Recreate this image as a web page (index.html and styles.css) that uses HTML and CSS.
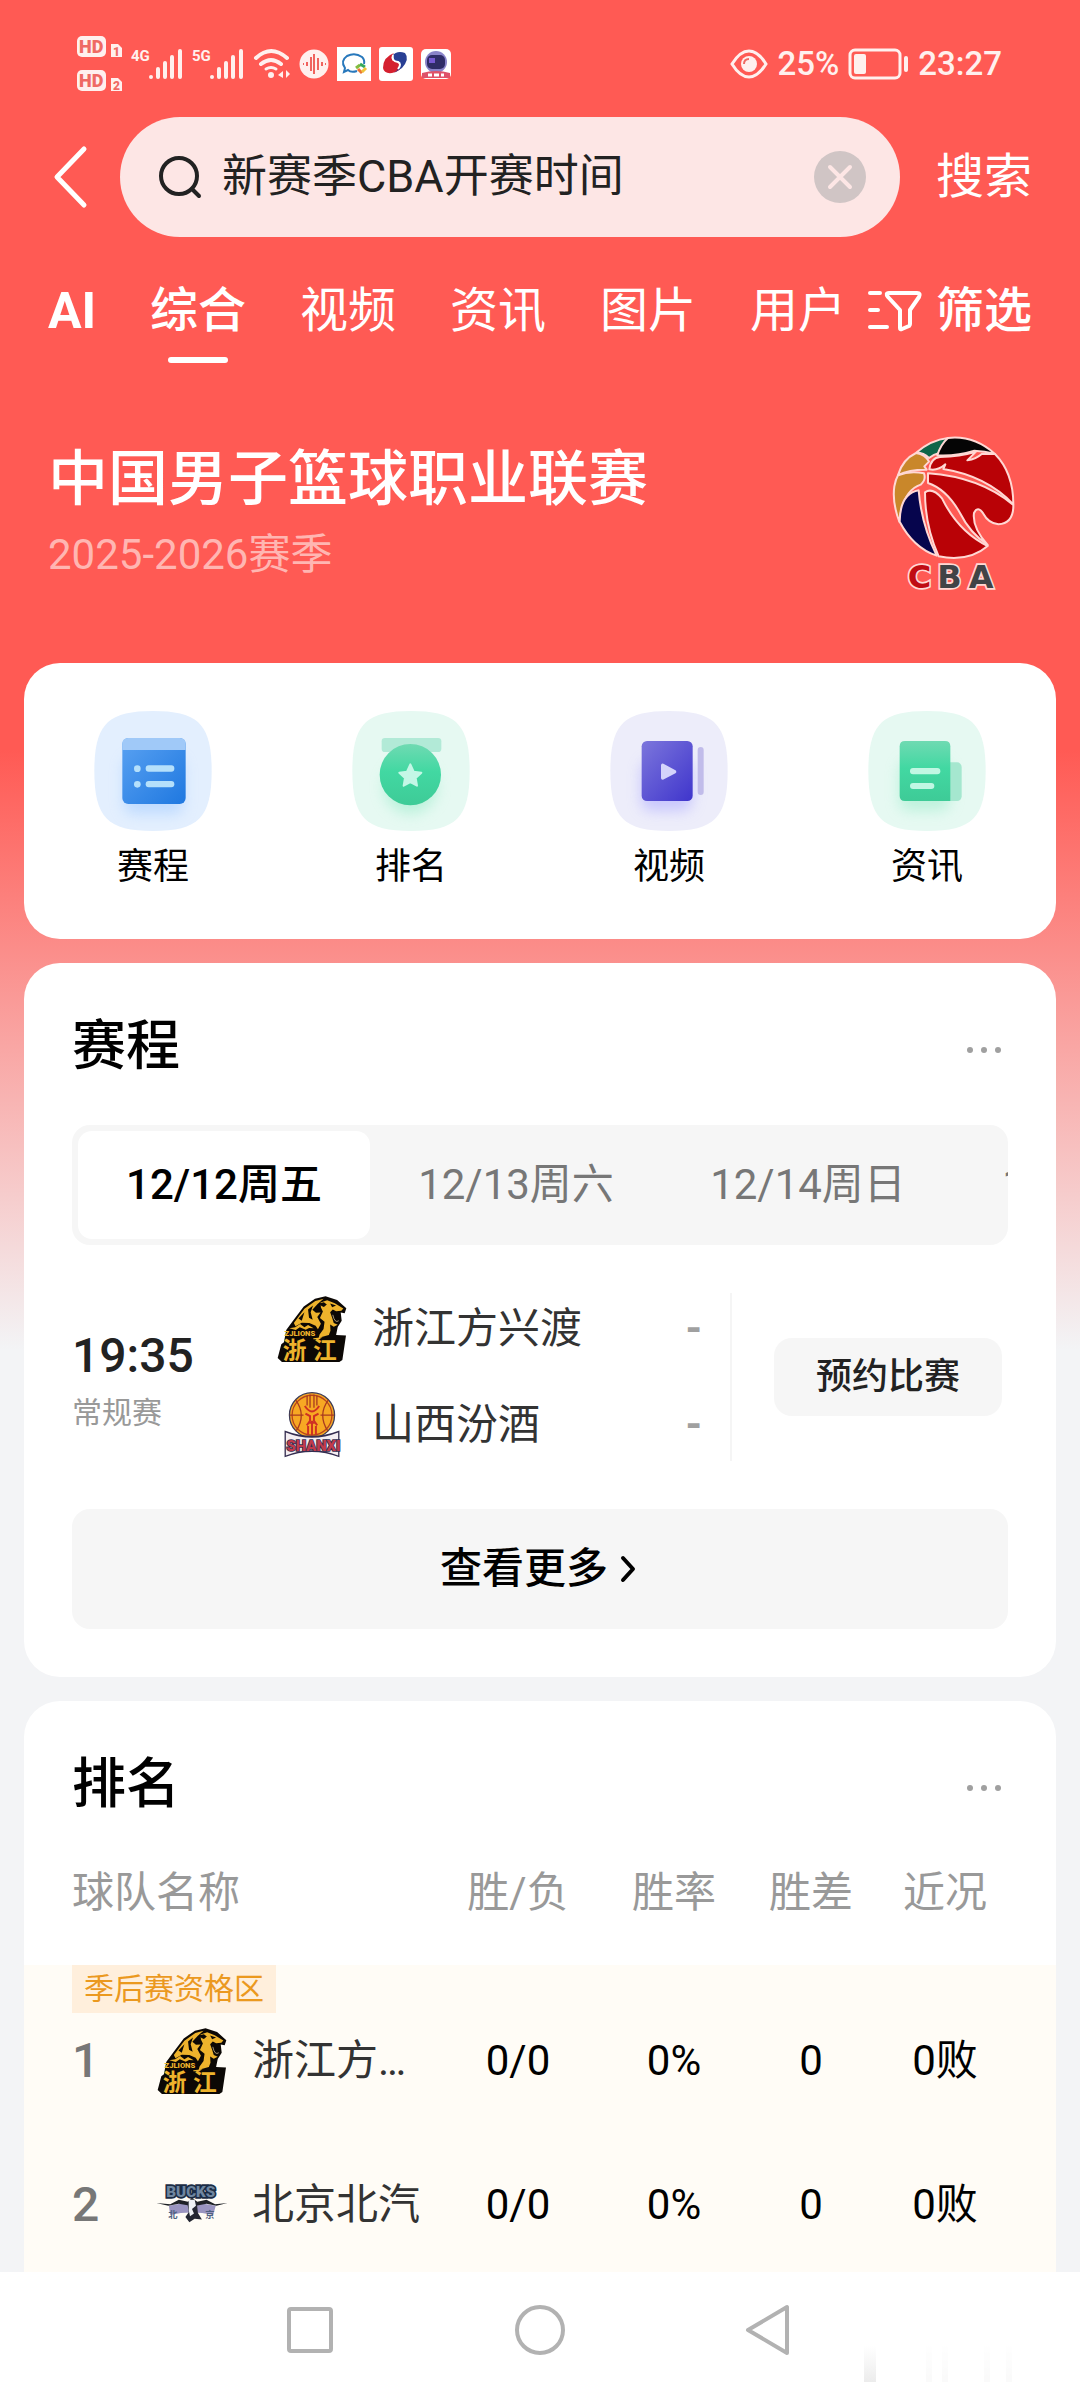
FILE: index.html
```html
<!DOCTYPE html>
<html lang="zh-CN">
<head>
<meta charset="utf-8">
<meta name="viewport" content="width=device-width, initial-scale=1">
<title>新赛季CBA开赛时间</title>
<link rel="stylesheet" href="styles.css">
</head>
<body>
<svg class="defs" width="0" height="0" aria-hidden="true">
  <defs>
    <linearGradient id="blue" x1="0" y1="0" x2="1" y2="1"><stop offset="0" stop-color="#5aa2f2"/><stop offset="1" stop-color="#1f78e0"/></linearGradient>
    <linearGradient id="green" x1="0" y1="0" x2="0" y2="1"><stop offset="0" stop-color="#6fdab2"/><stop offset=".45" stop-color="#42d8a2"/><stop offset="1" stop-color="#3ecb97"/></linearGradient>
    <linearGradient id="violet" x1="0" y1="0" x2="1" y2="1"><stop offset="0" stop-color="#7c76dc"/><stop offset="1" stop-color="#3f35cc"/></linearGradient>
    <linearGradient id="smudge" x1="0" y1="0" x2="0" y2="1"><stop offset="0" stop-color="#fff"/><stop offset="1" stop-color="#ececec"/></linearGradient>
    <filter id="soft" x="-50%" y="-50%" width="200%" height="200%"><feGaussianBlur stdDeviation="20"/></filter>
    <path id="squircle" d="M0 180C0 40 40 0 176 0S352 40 352 180S312 360 176 360S0 320 0 180Z"/>
    <symbol id="bars" viewBox="0 0 34 30"><g fill="#fff0ee"><circle cx="2" cy="28" r="2"/><rect x="7" y="18" width="4" height="12" rx="2"/><rect x="14" y="12" width="4" height="18" rx="2"/><rect x="21" y="6" width="4" height="24" rx="2"/><rect x="29" y="0" width="4" height="30" rx="2"/></g></symbol>
    <symbol id="zhejiang" viewBox="84 76 210 200">
      <path fill="#0c0805" d="M111 179L132 150L164 108L198 84L230 77L265 88L293 113L288 128L276 126L279 151L267 170L262 194L292 196L281 270L272 276H98L85 264L96 222L104 216Z"/>
      <path fill="#eeb32c" d="M134 158L166 115L199 91L224 84L206 100L190 118L201 127L215 126L205 140L216 160L207 177L200 166L181 158L158 157L139 168ZM215 96L235 89L258 98L284 114L278 121L262 122L252 117L244 125L250 142L255 158L267 163L255 169L244 162L245 181L240 194L218 200L208 207L212 193L224 176L227 154L213 143L222 123L216 111ZM120 174L138 171L153 161L166 171L177 164L194 174L180 173L170 178L152 171L140 179Z"/>
      <path fill="#0c0805" d="M210 99L225 95L234 102L225 109L218 106ZM244 99L262 105L250 110ZM148 144L166 125L158 151ZM177 117L192 105L185 125L191 148L180 142Z"/>
      <path fill="none" stroke="#f6ddaa" stroke-width="2" d="M252 133Q258 160 270 151"/>
      <text x="106" y="198" class="logo-latin" font-size="23" fill="#eeb32c">ZJLIONS</text>
      <g class="logo-han" font-size="72" fill="#eeb32c"><text x="100" y="267">浙</text><text x="192" y="267">江</text></g>
      <path d="M193 204l28-3-10 6h-18z" fill="#eeb32c"/>
    </symbol>
    <symbol id="shanxi" viewBox="100 364 172 202">
      <circle cx="186" cy="435" r="69" fill="#f7a823" stroke="#3d3c58" stroke-width="4"/>
      <circle cx="186" cy="435" r="61" fill="none" stroke="#b8451c" stroke-width="4"/>
      <g fill="none" stroke="#a83a20" stroke-width="4"><path d="M118 435H160M212 435H254M136 388Q170 435 137 484M236 388Q202 435 235 484M171 375V405M180 372V412M192 372V412M201 375V405"/><path d="M164 407Q186 440 208 407M166 430L180 438V452L170 466M206 430L192 438V452L202 466M174 458H198M174 468V494M186 452V496M198 468V494" stroke="#cf3023" stroke-width="6"/></g>
      <path fill="#342d50" d="M102 482Q186 514 270 482V564Q186 532 102 564Z"/>
      <path fill="#f4eef2" d="M106 488Q186 520 266 488V558Q186 526 106 558Z"/>
      <text x="108" y="545" class="logo-latin" font-size="45" fill="#c13b4b" stroke="#342d50" stroke-width="5" paint-order="stroke">SHANXI</text>
    </symbol>
  </defs>
</svg>

<div class="app">
  <header class="top">
    <div class="status">
      <div class="status-left">
        <svg width="46" height="56" viewBox="0 0 46 56" fill="#fff0ee" role="img" aria-label="HD">
          <rect x="0" y="0" width="29" height="21" rx="5"/><path d="M34 8h7l4 4v9h-11z"/>
          <rect x="0" y="34" width="29" height="21" rx="5"/><path d="M34 42h7l4 4v9h-11z"/>
          <g fill="#ef6a64" class="logo-latin"><text x="2" y="17" font-size="18">HD</text><text x="2" y="51" font-size="18">HD</text><text x="36" y="20" font-size="12">1</text><text x="36" y="54" font-size="12">2</text></g>
        </svg>
        <div class="signal"><span>4G</span><svg width="34" height="30"><use href="#bars"/></svg></div>
        <div class="signal"><span>5G</span><svg width="34" height="30"><use href="#bars"/></svg></div>
        <svg width="38" height="32" viewBox="0 0 38 32" fill="none" stroke="#fff0ee" stroke-width="4" stroke-linecap="round"><path d="M3 10Q18-4 34 10M8 16Q18 8 28 16"/><circle cx="18" cy="27" r="3" fill="#fff0ee" stroke="none"/><path d="M13 21Q18 18 23 21" stroke-width="3"/><path d="M30 23v7l-5-3zM33 22v8l4-4z" fill="#fff0ee" stroke="none"/></svg>
        <svg width="30" height="30" viewBox="0 0 30 30"><circle cx="15" cy="15" r="14.500" fill="#fff0ee"/><path d="M4 15h1M8 13v4M12 8v14M15 5v20M19 9v12M23 13v4M26 15h1" stroke="#f0635e" stroke-width="2"/></svg>
        <svg width="34" height="34" viewBox="0 0 34 34"><path fill="#fff" d="M0 0h34v34H0z"/><path d="M20 24Q14 26 11 23L7 25L8 21Q3 14 10 9Q18 5 25 10Q28 13 27 17" fill="none" stroke="#2878bc" stroke-width="2"/><path d="M19 21l4-3" stroke="#83bd3f" stroke-width="3"/><path d="M23 17l5 3" stroke="#35a85a" stroke-width="3"/><path d="M21 22l4 4" stroke="#eb7532" stroke-width="3"/><path d="M25 25l4-4" stroke="#efc23a" stroke-width="3"/></svg>
        <svg width="34" height="34" viewBox="0 0 34 34"><rect width="34" height="34" rx="3" fill="#fff"/><path fill="#d5202f" d="M15 6Q4 10 4 21Q5 27 13 26Q23 24 23 17Q20 13 14 14Q11 10 15 6Z"/><path fill="#293f94" d="M13 9Q18 3 26 6Q31 12 23 21L15 26Q23 20 20 15Q12 14 13 9Z"/><path d="M14 8Q12 14 19 15Q23 17 19 22" fill="none" stroke="#fff" stroke-width="2"/></svg>
        <svg width="30" height="30" viewBox="0 0 30 30"><rect width="30" height="30" rx="5" fill="#fff"/><circle cx="15" cy="13" r="11" fill="#8a83c9"/><rect x="6" y="6" width="18" height="14" rx="5" fill="#302c67"/><path d="M8 9h6v5H8z" fill="#7759d2"/><path d="M1 24q14-4 28 0v5H1z" fill="#df5269"/><path d="M7 26h4M13 26h5M20 26h3" stroke="#fff" stroke-width="3"/></svg>
      </div>
      <div class="status-right">
        <svg width="38" height="30" viewBox="0 0 38 30"><path d="M2 15Q10 2 19 2T36 15Q28 28 19 28T2 15Z" fill="none" stroke="#fff0ee" stroke-width="3"/><circle cx="19" cy="15" r="8" fill="#fff0ee"/><path d="M14 15Q14 10 19 10" stroke="#ef6a64" stroke-width="2" fill="none"/></svg>
        <span>25%</span>
        <svg width="61" height="32" viewBox="0 0 61 32" fill="#fff0ee"><rect x="2" y="2" width="50" height="28" rx="5" fill="none" stroke="#fff0ee" stroke-width="3"/><rect x="6" y="6" width="12" height="20" rx="2"/><rect x="56" y="8" width="4" height="16" rx="2"/></svg>
        <time>23:27</time>
      </div>
    </div>

    <form class="search">
      <button class="icon-button back" type="button" aria-label="返回"><svg width="48" height="64" viewBox="0 0 48 64"><path d="M36 4L9 32L36 60" fill="none" stroke="#fff" stroke-width="5" stroke-linecap="round" stroke-linejoin="round"/></svg></button>
      <div class="search-box">
        <svg width="42" height="42" viewBox="0 0 42 42" fill="none" stroke="#222" stroke-width="4" stroke-linecap="round"><circle cx="20" cy="20" r="18"/><path d="M33 33l7 7"/></svg>
        <input type="text" aria-label="搜索内容" value="新赛季CBA开赛时间">
        <button class="icon-button" type="button" aria-label="清除"><svg width="52" height="52" viewBox="0 0 52 52"><circle cx="26" cy="26" r="26" fill="#d0c5c5"/><path d="M16 16L36 36M36 16L16 36" stroke="#fde6e5" stroke-width="4" stroke-linecap="round"/></svg></button>
      </div>
      <button class="submit" type="submit">搜索</button>
    </form>

    <div class="tabs-row">
      <nav class="tabs">
        <a class="ai" href="#ai">AI</a><a class="current" href="#all">综合</a><a href="#video">视频</a><a href="#news">资讯</a><a href="#images">图片</a><a href="#users">用户</a>
      </nav>
      <button class="filter" type="button"><svg width="54" height="42" viewBox="0 0 54 42" fill="none" stroke="#fff" stroke-width="4" stroke-linecap="round" stroke-linejoin="round"><path d="M2 3h10M2 20h8M2 37h17M21 3h28q4 0 2 4L42 20v14q0 1-1 2l-7 3q-2 1-2-1V20L20 7q-3-4 1-4z"/></svg>筛选</button>
    </div>
  </header>

  <main class="content">
    <section class="hero">
      <div>
        <h1>中国男子篮球职业联赛</h1>
        <p>2025-2026赛季</p>
      </div>
      <svg class="league-logo" width="124" height="156" viewBox="96 42 372 468" role="img" aria-label="CBA">
        <g stroke="#ffd8d4" stroke-width="6" stroke-linejoin="round">
          <path fill="#0e6549" d="M170 94Q213 57 264 51Q245 75 236 97Q222 100 207 111Q191 96 170 94Z"/>
          <path fill="#050505" d="M264 51Q340 42 404 98Q374 90 343 89Q290 106 232 103Q242 70 264 51Z"/>
          <path fill="#c9872a" d="M114 162Q128 115 168 96Q197 101 207 122L193 136L200 146Q150 145 114 162Z"/>
          <path fill="#c9872a" d="M192 157Q199 177 182 191Q128 209 118 302Q96 244 103 196Q107 175 114 163Q150 148 192 157Z"/>
          <path fill="#06054d" d="M176 208Q184 310 230 404Q160 380 119 302Q120 218 176 208Z"/>
          <path fill="#b90206" d="M208 145Q213 110 240 108Q300 106 348 92L322 118Q348 114 366 98L405 99Q460 155 460 250Q380 165 250 144L256 130Q234 150 208 145Z"/>
          <path fill="#b90206" d="M204 157Q360 168 460 252Q461 307 415 310Q385 306 370 278Q353 252 342 276Q336 320 383 372Q330 336 300 276Q260 205 204 186Z"/>
          <path fill="#b90206" d="M195 214Q217 198 246 232Q295 332 383 375Q326 424 236 406Q195 315 195 214Z"/>
        </g>
        <g class="logo-wide" font-size="96" stroke="#ffd8d4" stroke-width="10" paint-order="stroke"><text x="143" y="502" fill="#c00c13">C</text><text x="232" y="502" fill="#414346">B</text><text x="326" y="502" fill="#414346">A</text></g>
      </svg>
    </section>

    <nav class="card shortcuts">
      <a href="#schedule">
        <svg width="118" height="120" viewBox="0 0 352 360"><use href="#squircle" fill="#e3effe"/><rect x="88" y="140" width="180" height="170" rx="30" fill="#a9cfff" opacity=".6" filter="url(#soft)"/><rect x="84" y="81" width="190" height="198" rx="18" fill="url(#blue)"/><path d="M84 117V99q0-18 18-18h154q18 0 18 18v18z" fill="#a0c9f8"/><g fill="#b5e0fb"><circle cx="129" cy="173" r="10"/><circle cx="129" cy="220" r="10"/><rect x="154" y="163" width="86" height="19" rx="9"/><rect x="154" y="210" width="86" height="19" rx="9"/></g></svg>
        <span>赛程</span></a>
      <a href="#ranking">
        <svg width="118" height="120" viewBox="0 0 352 360"><use href="#squircle" fill="#e6f9f2"/><circle cx="174" cy="228" r="80" fill="#9deccb" opacity=".6" filter="url(#soft)"/><rect x="88" y="81" width="179" height="42" rx="10" fill="#b2ead7"/><circle cx="174" cy="191" r="92" fill="url(#green)"/><path d="M174 160l10 22 23 3-17 16 4 23-20-11-20 11 4-23-17-16 23-3z" fill="#c4f7e6" stroke="#c4f7e6" stroke-width="6" stroke-linejoin="round"/></svg>
        <span>排名</span></a>
      <a href="#clips">
        <svg width="118" height="120" viewBox="0 0 352 360"><use href="#squircle" fill="#ededfa"/><rect x="92" y="150" width="154" height="150" rx="30" fill="#aaa8ff" opacity=".55" filter="url(#soft)"/><rect x="262" y="108" width="18" height="144" rx="9" fill="#c1bcea"/><rect x="94" y="90" width="153" height="180" rx="16" fill="url(#violet)"/><path d="M157 163v38l36-19z" fill="#d4d4fb" stroke="#d4d4fb" stroke-width="10" stroke-linejoin="round"/></svg>
        <span>视频</span></a>
      <a href="#articles">
        <svg width="118" height="120" viewBox="0 0 352 360"><use href="#squircle" fill="#e6f9f2"/><rect x="92" y="150" width="154" height="150" rx="30" fill="#9deccb" opacity=".55" filter="url(#soft)"/><rect x="200" y="154" width="80" height="116" rx="14" fill="#a5e7cf"/><path d="M246 270H110q-16 0-16-16V106q0-16 16-16h120q16 0 16 16z" fill="url(#green)"/><g fill="#c1f7e3"><rect x="125" y="171" width="91" height="19" rx="9"/><rect x="125" y="216" width="73" height="18" rx="9"/></g></svg>
        <span>资讯</span></a>
    </nav>

    <section class="card schedule" id="schedule">
      <div class="card-head"><h2>赛程</h2><button class="icon-button" type="button" aria-label="更多选项"><svg width="48" height="24" viewBox="0 0 48 24" fill="#a0a0a0"><circle cx="10" cy="15" r="3"/><circle cx="24" cy="15" r="3"/><circle cx="38" cy="15" r="3"/></svg></button></div>
      <div class="dates">
        <button class="current" type="button">12/12周五</button><button type="button">12/13周六</button><button type="button">12/14周日</button><button type="button">12/15周一</button>
      </div>
      <div class="match">
        <div class="when"><time>19:35</time><small>常规赛</small></div>
        <div class="teams">
          <div class="team"><svg width="72" height="66"><use href="#zhejiang"/></svg><span>浙江方兴渡</span><b>-</b></div>
          <div class="team"><svg width="72" height="66"><use href="#shanxi"/></svg><span>山西汾酒</span><b>-</b></div>
        </div>
        <div class="booking"><button type="button">预约比赛</button></div>
      </div>
      <a class="more" href="#more">查看更多<svg width="20" height="28" viewBox="0 0 20 28"><path d="M3 3l10 11L3 25" fill="none" stroke="#000" stroke-width="4" stroke-linecap="round" stroke-linejoin="round"/></svg></a>
    </section>

    <section class="card ranking" id="ranking">
      <div class="card-head"><h2>排名</h2><button class="icon-button" type="button" aria-label="更多选项"><svg width="48" height="24" viewBox="0 0 48 24" fill="#a0a0a0"><circle cx="10" cy="15" r="3"/><circle cx="24" cy="15" r="3"/><circle cx="38" cy="15" r="3"/></svg></button></div>
      <table>
        <colgroup><col><col class="c-record"><col class="c-rate"><col class="c-diff"><col class="c-form"></colgroup>
        <thead><tr><th scope="col">球队名称</th><th scope="col">胜/负</th><th scope="col">胜率</th><th scope="col">胜差</th><th scope="col">近况</th></tr></thead>
        <tbody>
          <tr class="zone"><td colspan="5"><span>季后赛资格区</span></td></tr>
          <tr><td><div class="club"><b>1</b><svg width="72" height="66"><use href="#zhejiang"/></svg><span>浙江方兴渡</span></div></td><td>0/0</td><td>0%</td><td>0</td><td>0败</td></tr>
          <tr><td><div class="club"><b>2</b><svg width="72" height="66" viewBox="288 516 216 200">
            <text x="318" y="592" class="logo-latin" font-size="46" fill="#6f86a0" stroke="#1b2c45" stroke-width="10" paint-order="stroke">BUCKS</text>
            <path fill="#9a94c0" d="M326 618Q394 604 468 618L460 646Q394 632 330 646Z"/>
            <path fill="#1e2126" d="M288 610L330 614L356 600L384 606L396 594L412 606L440 600L466 614L504 610L470 618L440 612L400 620L356 612L324 618Z"/>
            <path fill="#242733" d="M382 610L410 606L414 640L426 660L404 658L388 668L376 652L386 638Z"/>
            <path fill="#eef1f5" d="M386 600L404 600L408 618L396 628L402 642L390 650L386 632Z"/>
            <g class="logo-han" font-size="28" fill="#4e6180"><text x="324" y="656">北</text><text x="436" y="656">京</text></g>
          </svg><span>北京北汽</span></div></td><td>0/0</td><td>0%</td><td>0</td><td>0败</td></tr>
        </tbody>
      </table>
    </section>
  </main>

  <footer class="system-nav">
    <button class="icon-button" type="button" aria-label="最近任务"><svg width="52" height="52" viewBox="0 0 52 52"><rect x="5" y="5" width="42" height="42" rx="2" fill="none" stroke="#b2b2b2" stroke-width="4"/></svg></button>
    <button class="icon-button" type="button" aria-label="主屏幕"><svg width="52" height="52" viewBox="0 0 52 52"><circle cx="26" cy="26" r="23" fill="none" stroke="#b2b2b2" stroke-width="4"/></svg></button>
    <button class="icon-button" type="button" aria-label="返回"><svg width="52" height="52" viewBox="0 0 52 52"><path d="M43 3V49L4 26Z" fill="none" stroke="#b2b2b2" stroke-width="4" stroke-linejoin="round"/></svg></button>
    <svg class="shade" width="210" height="36" viewBox="0 0 210 36" aria-hidden="true" fill="url(#smudge)"><rect x="4" width="12" height="36"/><g opacity=".25"><rect x="66" width="6" height="36"/><rect x="82" width="6" height="36"/><rect x="124" width="6" height="36"/><rect x="146" width="6" height="36"/></g></svg>
  </footer>
</div>
</body>
</html>
```

FILE: styles.css
```css
* { box-sizing: border-box; }

body {
  margin: 0;
  font-family: Roboto, "Noto Sans CJK SC", sans-serif;
  font-size: 42px;
  line-height: 60px;
  color: #000;
}

h1, h2, p { margin: 0; }
a { color: inherit; text-decoration: none; }
svg { display: block; flex: none; overflow: visible; }
button, input { font: inherit; color: inherit; border: 0; padding: 0; background: none; }
.icon-button { display: flex; }
.defs { position: absolute; }

.logo-latin { font-family: Roboto, sans-serif; font-weight: 900; }
.logo-wide { font-family: "DejaVu Sans", sans-serif; font-weight: 700; }
.logo-han { font-family: "Noto Sans CJK SC", sans-serif; font-weight: 700; }

.app {
  display: flex;
  flex-direction: column;
  height: 100vh;
  background: linear-gradient(#ff5a54 750px, #f3f4f6 1350px);
}

/* Status bar */
.top { color: #fff; }
.status {
  display: flex;
  justify-content: space-between;
  padding: 36px 78px 24px 77px;
  height: 117px;
  color: #fff0ee;
}
.status-left, .status-right { display: flex; align-items: center; height: 56px; gap: 9px; }
.status-left { gap: 8px; }
.status-right { font-size: 33px; font-weight: 500; }
.signal { display: flex; align-items: flex-start; }
.signal span { font-size: 15px; line-height: 15px; font-weight: 700; width: 18px; }
.signal svg { margin-right: 1px; }

/* Search */
.search { display: flex; align-items: center; padding: 0 48px; }
.search-box {
  flex: 1;
  min-width: 0;
  display: flex;
  align-items: center;
  gap: 21px;
  height: 120px;
  margin: 0 36px 0 24px;
  padding: 0 34px 0 39px;
  border-radius: 60px;
  background: #fde6e5;
}
.search-box input { flex: 1; min-width: 0; height: 60px; font-size: 45px; color: #222; outline: 0; }
.submit { font-size: 48px; }

.tabs-row {
  display: flex;
  justify-content: space-between;
  padding: 36px 48px 0;
  font-size: 48px;
  line-height: 76px;
}
.tabs { display: flex; gap: 54px; height: 90px; overflow: hidden; }
.tabs a { position: relative; white-space: nowrap; }
.tabs .ai { width: 48px; font-size: 50px; font-weight: 700; }
.tabs .current { font-weight: 500; }
.tabs .current::after {
  content: "";
  position: absolute;
  left: 18px;
  right: 18px;
  bottom: 0;
  height: 6px;
  border-radius: 3px;
  background: #fff;
}
.filter { display: flex; align-items: center; gap: 14px; height: 76px; font-weight: 500; white-space: nowrap; }

/* Scrolling content */
.content {
  flex: 1;
  min-height: 0;
  overflow-y: auto;
  scrollbar-width: none;
  padding: 0 24px;
}
.hero {
  display: flex;
  justify-content: space-between;
  align-items: flex-start;
  padding: 72px 40px 72px 24px;
  color: #fff;
}
.hero h1 { font-size: 60px; line-height: 90px; font-weight: 500; }
.hero p { color: #ffb6b2; }

.card { margin-bottom: 24px; border-radius: 36px; background: #fff; }

.shortcuts { display: grid; grid-template-columns: repeat(4, 1fr); padding: 48px 0; }
.shortcuts a {
  display: flex;
  flex-direction: column;
  align-items: center;
  gap: 12px;
  font-size: 36px;
  line-height: 48px;
}

.card-head { display: flex; align-items: center; justify-content: space-between; height: 72px; }
.card-head h2 { font-size: 54px; font-weight: 500; }

/* Schedule */
.schedule { padding: 48px; }
.dates {
  display: flex;
  margin: 42px 0 48px;
  padding: 6px;
  height: 120px;
  overflow: hidden;
  border-radius: 18px;
  background: #f6f6f6;
  color: #777;
}
.dates button { flex: 0 0 292px; border-radius: 14px; }
.dates .current { background: #fff; color: #000; font-weight: 500; }

.match { display: flex; }
.when { flex: 0 0 204px; display: flex; flex-direction: column; justify-content: center; }
.when time { font-size: 48px; line-height: 72px; font-weight: 500; color: #222; }
.when small { font-size: 30px; line-height: 42px; color: #999; }
.teams {
  flex: 1;
  display: grid;
  gap: 24px;
  padding-right: 28px;
  border-right: 2px solid #f5f5f5;
}
.team { display: flex; align-items: center; gap: 24px; height: 72px; color: #333; }
.team span { flex: 1; }
.team b { color: #a0a0a0; font-weight: 700; }
.booking { flex: 0 0 276px; display: flex; align-items: center; justify-content: flex-end; padding-right: 6px; }
.booking button { width: 228px; height: 78px; border-radius: 18px; background: #f6f6f6; color: #222; font-size: 36px; font-weight: 500; }
.more {
  display: flex;
  align-items: center;
  justify-content: center;
  gap: 12px;
  height: 120px;
  margin-top: 48px;
  border-radius: 18px;
  background: #f6f6f6;
  font-weight: 500;
}

/* Ranking */
.ranking { padding-top: 48px; }
.ranking .card-head { padding: 0 48px; }
table { width: 100%; margin-top: 48px; border-collapse: collapse; table-layout: fixed; }
.c-record, .c-rate { width: 156px; }
.c-diff { width: 118px; }
.c-form { width: 186px; }
th, td { padding: 0; text-align: center; font-weight: 400; white-space: nowrap; }
th { padding-bottom: 48px; line-height: 48px; color: #999; }
th:first-child { padding-left: 48px; text-align: left; }
th:last-child, td:last-child { padding-right: 36px; }
tbody { background: #fffcf6; }
tbody td { height: 144px; padding-bottom: 48px; line-height: 96px; }
.zone td { height: 48px; padding: 0 48px; line-height: 48px; text-align: left; }
.zone span { display: block; width: max-content; padding: 0 12px; background: #ffefdc; color: #eb991f; font-size: 30px; }
.club { display: flex; align-items: center; height: 96px; padding-left: 48px; color: #333; }
.club b { width: 84px; text-align: left; font-size: 48px; font-weight: 500; color: #777; }
.club span { width: 168px; margin-left: 24px; overflow: hidden; text-align: left; text-overflow: ellipsis; }

/* System navigation */
.system-nav {
  position: relative;
  display: grid;
  grid-template-columns: repeat(3, 230px);
  justify-content: center;
  justify-items: center;
  align-items: center;
  height: 116px;
  background: #fff;
}
.shade { position: absolute; right: 10px; bottom: 6px; }
```
